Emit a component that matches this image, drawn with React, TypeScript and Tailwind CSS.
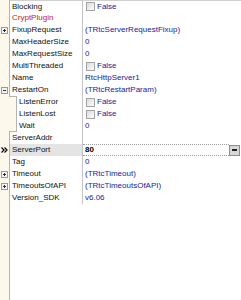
import React from "react";

type Row = {
  name: string;
  value?: string;
  check?: boolean;
  red?: boolean;
  plus?: boolean;
  minus?: boolean;
  child?: "first" | "mid" | "last";
  selected?: boolean;
};

const rows: Row[] = [
  { name: "Blocking", value: "False", check: true },
  { name: "CryptPlugin", red: true, value: "" },
  { name: "FixupRequest", plus: true, value: "(TRtcServerRequestFixup)" },
  { name: "MaxHeaderSize", value: "0" },
  { name: "MaxRequestSize", value: "0" },
  { name: "MultiThreaded", value: "False", check: true },
  { name: "Name", value: "RtcHttpServer1" },
  { name: "RestartOn", minus: true, value: "(TRtcRestartParam)" },
  { name: "ListenError", child: "first", value: "False", check: true },
  { name: "ListenLost", child: "mid", value: "False", check: true },
  { name: "Wait", child: "last", value: "0" },
  { name: "ServerAddr", value: "" },
  { name: "ServerPort", selected: true, value: "80" },
  { name: "Tag", value: "0" },
  { name: "Timeout", plus: true, value: "(TRtcTimeout)" },
  { name: "TimeoutsOfAPI", plus: true, value: "(TRtcTimeoutsOfAPI)" },
  { name: "Version_SDK", value: "v6.06" },
];

function ExpandBox({ minus }: { minus?: boolean }) {
  return (
    <svg width="7" height="7" viewBox="0 0 7 7" className="block">
      <rect x="0.5" y="0.5" width="6" height="6" fill="#f4f4f4" stroke="#9a9a9a" />
      <line x1="2" y1="3.5" x2="5" y2="3.5" stroke="#303030" />
      {!minus && <line x1="3.5" y1="2" x2="3.5" y2="5" stroke="#303030" />}
    </svg>
  );
}

function CheckBox() {
  return (
    <div className="w-[9px] h-[9px] border border-[#a4a4a4] bg-gradient-to-br from-[#dcdcdc] to-[#fbfbfb] shrink-0" />
  );
}

function Marker() {
  return (
    <svg width="7" height="6" viewBox="0 0 7 6" className="block">
      <path d="M0.5 0.5 L3 3 L0.5 5.5 M3.5 0.5 L6 3 L3.5 5.5" stroke="#000" strokeWidth="1.2" fill="none" />
    </svg>
  );
}

export default function App() {
  return (
    <div
      className="w-[241px] h-[300px] bg-white overflow-hidden flex flex-col text-[8px] leading-[12px]"
      style={{ fontFamily: '"Liberation Sans", Arial, sans-serif' }}
    >
      {rows.map((r, i) => (
        <div key={r.name} className="flex h-[12px] shrink-0">
          {r.child ? (
            <div className="flex w-[17px] shrink-0 bg-[#fdf8ec]">
              <div className="w-[9px]" />
              <div
                className={
                  "w-[8px] border-r border-[#b4b4b4] " +
                  (r.child === "first" ? "border-t " : "") +
                  (r.child === "last" ? "border-b " : "")
                }
              />
            </div>
          ) : (
            <div className="w-[10px] shrink-0 bg-[#fdf8ec] border-r border-[#b4b4b4] flex items-center justify-center">
              {r.plus && <ExpandBox />}
              {r.minus && <ExpandBox minus />}
              {r.selected && <Marker />}
            </div>
          )}
          <div
            className={
              "flex items-center pl-[2px] whitespace-nowrap overflow-hidden border-r border-[#c4c4c4] " +
              (i === 0 ? "border-t border-t-[#d0d0d0] " : "") +
              (r.child ? "w-[66px] " : "w-[73px] ") +
              (r.selected ? "bg-[#e4e4e4] " : "") +
              (r.red ? "text-[#c01830]" : "text-[#101010]")
            }
          >
            {r.name}
          </div>
          {r.selected ? (
            <div className="flex-1 flex items-center">
              <div className="flex-1 h-full flex items-center pl-[2px] border-y border-dotted border-[#9c9c9c] font-bold text-black">
                {r.value}
              </div>
              <div className="w-[11px] h-[11px] mr-[1px] bg-[#d8d8d8] border border-[#8c8c8c] flex items-center justify-center shrink-0">
                <div className="w-[5px] h-[2px] bg-[#202020]" />
              </div>
            </div>
          ) : (
            <div
              className={
                "flex-1 flex items-center pl-[2px] whitespace-nowrap overflow-hidden text-[#22229a] " +
                (i === 0 ? "border-t border-[#d0d0d0]" : "")
              }
            >
              {r.check ? (
                <div className="flex items-center gap-[2px] pl-[1px]">
                  <CheckBox />
                  <span>{r.value}</span>
                </div>
              ) : (
                r.value
              )}
            </div>
          )}
        </div>
      ))}
      <div className="flex flex-1">
        <div className="w-[10px] bg-[#fdf8ec] border-r border-[#b4b4b4]" />
        <div className="flex-1 bg-white" />
      </div>
    </div>
  );
}
